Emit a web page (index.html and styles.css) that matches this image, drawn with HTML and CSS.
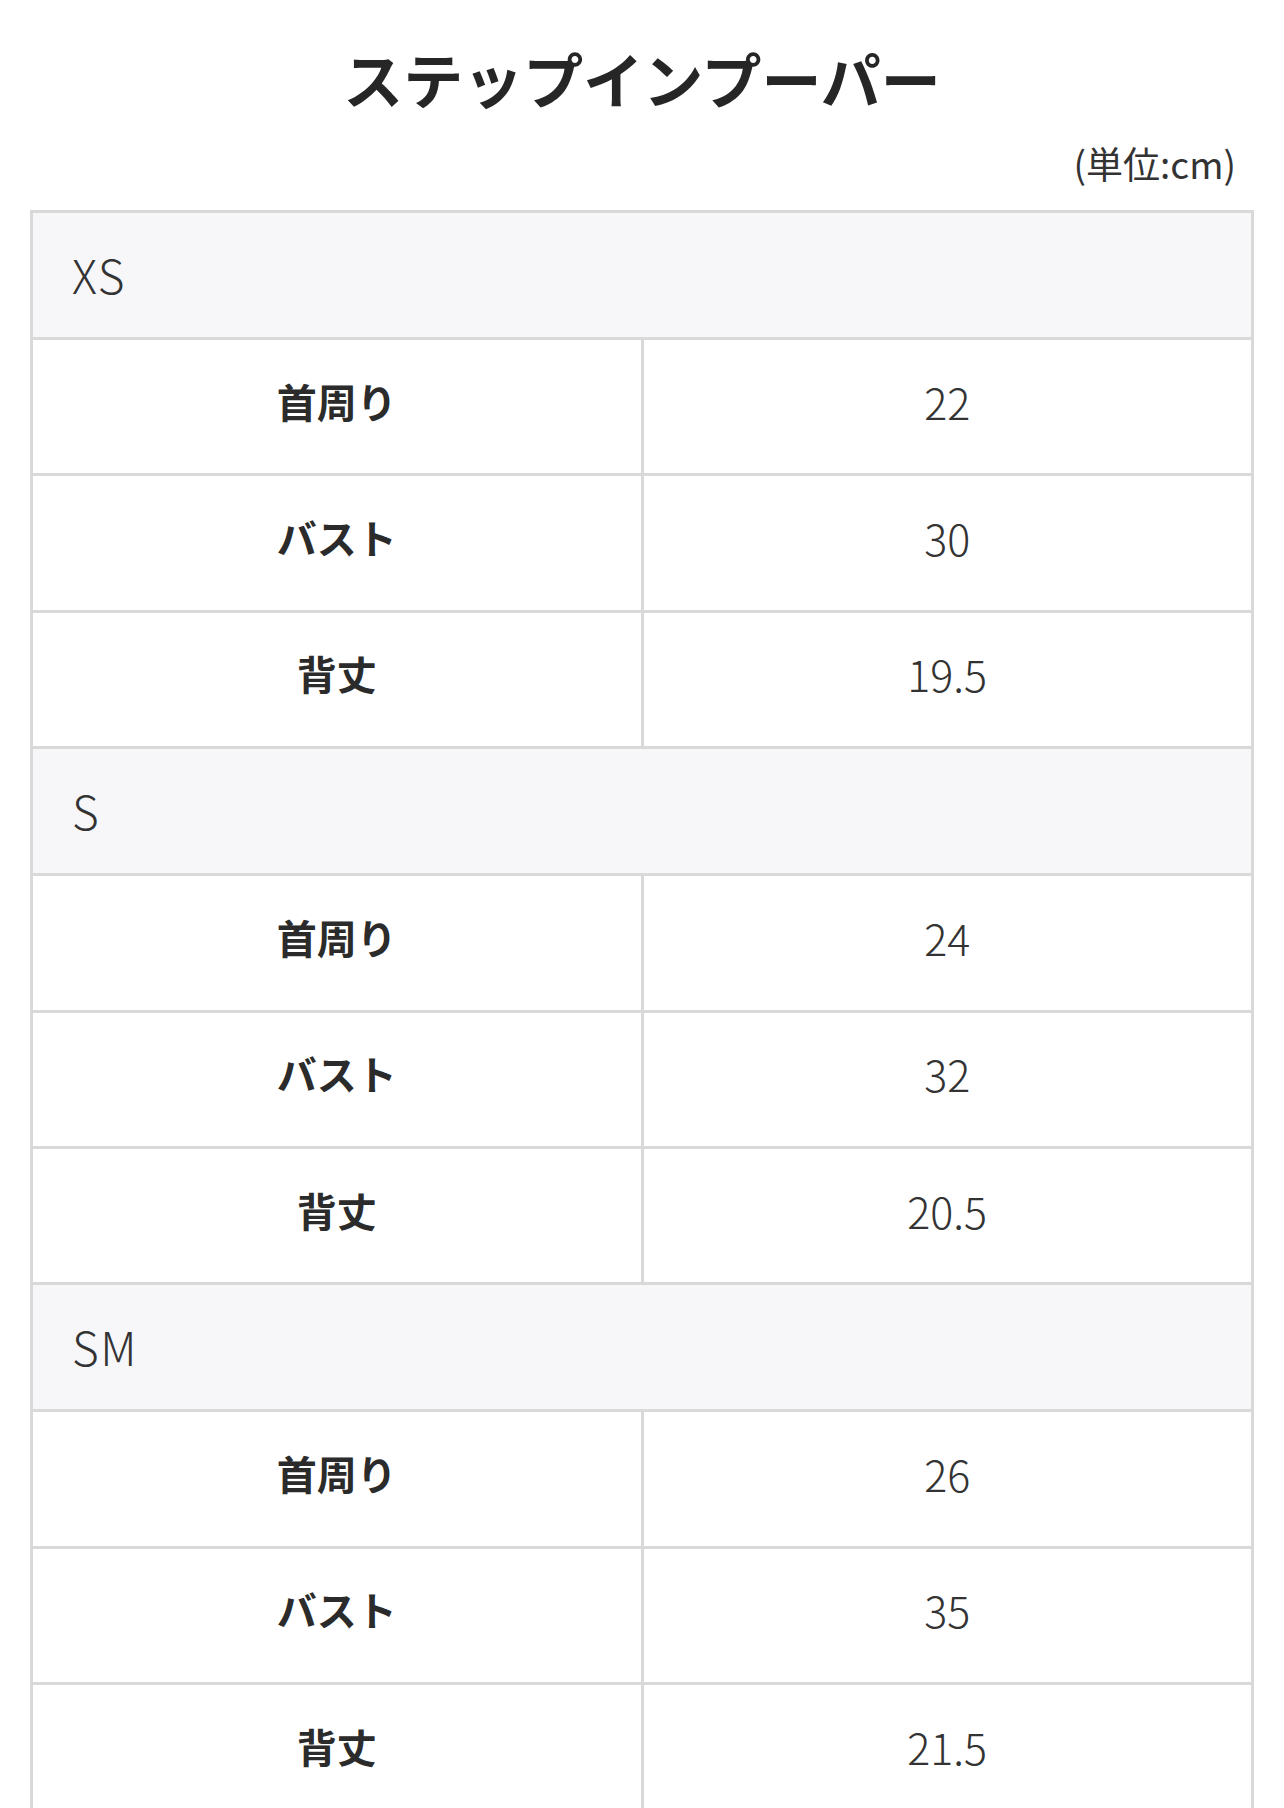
FILE: index.html
```html
<!DOCTYPE html>
<html lang="ja">
<head>
<meta charset="utf-8">
<title>ステップインプーパー サイズ表</title>
<link rel="stylesheet" href="styles.css">
</head>
<body>
<main class="page">
  <h1 class="title">ステップインプーパー</h1>
  <p class="unit">(単位:cm)</p>
  <div class="size-table">
    <div class="cell size">XS</div>
    <div class="cell label">首周り</div><div class="cell value">22</div>
    <div class="cell label">バスト</div><div class="cell value">30</div>
    <div class="cell label">背丈</div><div class="cell value">19.5</div>

    <div class="cell size">S</div>
    <div class="cell label">首周り</div><div class="cell value">24</div>
    <div class="cell label">バスト</div><div class="cell value">32</div>
    <div class="cell label">背丈</div><div class="cell value">20.5</div>

    <div class="cell size">SM</div>
    <div class="cell label">首周り</div><div class="cell value">26</div>
    <div class="cell label">バスト</div><div class="cell value">35</div>
    <div class="cell label">背丈</div><div class="cell value">21.5</div>
  </div>
</main>
</body>
</html>
```

FILE: styles.css
```css
html, body {
  margin: 0;
  padding: 0;
  background: #ffffff;
}

body {
  font-family: "Noto Sans CJK JP", "Noto Sans", sans-serif;
  color: #333333;
}

.page {
  display: flex;
  flex-direction: column;
  padding: 42px 30px 0 30px;
}

.title {
  margin: 0;
  text-align: center;
  font-size: 60px;
  line-height: 72px;
  font-weight: 700;
  color: #262626;
}

.unit {
  margin: 27px 18px 0 0;
  text-align: right;
  font-size: 37px;
  line-height: 44px;
  color: #333333;
}

.size-table {
  margin-top: 25px;
  display: grid;
  grid-template-columns: 1fr 1fr;
  gap: 3px;
  padding: 3px;
  background: #d9d9d9;
}

.cell {
  box-sizing: border-box;
  display: flex;
  align-items: center;
  background: #ffffff;
}

.size {
  grid-column: 1 / -1;
  height: 124px;
  padding: 0 0 2px 39px;
  background: #f7f7f9;
  font-size: 46px;
  letter-spacing: 1.5px;
  font-weight: 300;
  color: #333333;
}

.label {
  height: 133.4px;
  padding-bottom: 12px;
  justify-content: center;
  font-size: 40px;
  font-weight: 700;
  color: #2b2b2b;
}

.value {
  height: 133.4px;
  padding-bottom: 12px;
  justify-content: center;
  font-size: 43px;
  font-weight: 300;
  color: #333333;
}
```
